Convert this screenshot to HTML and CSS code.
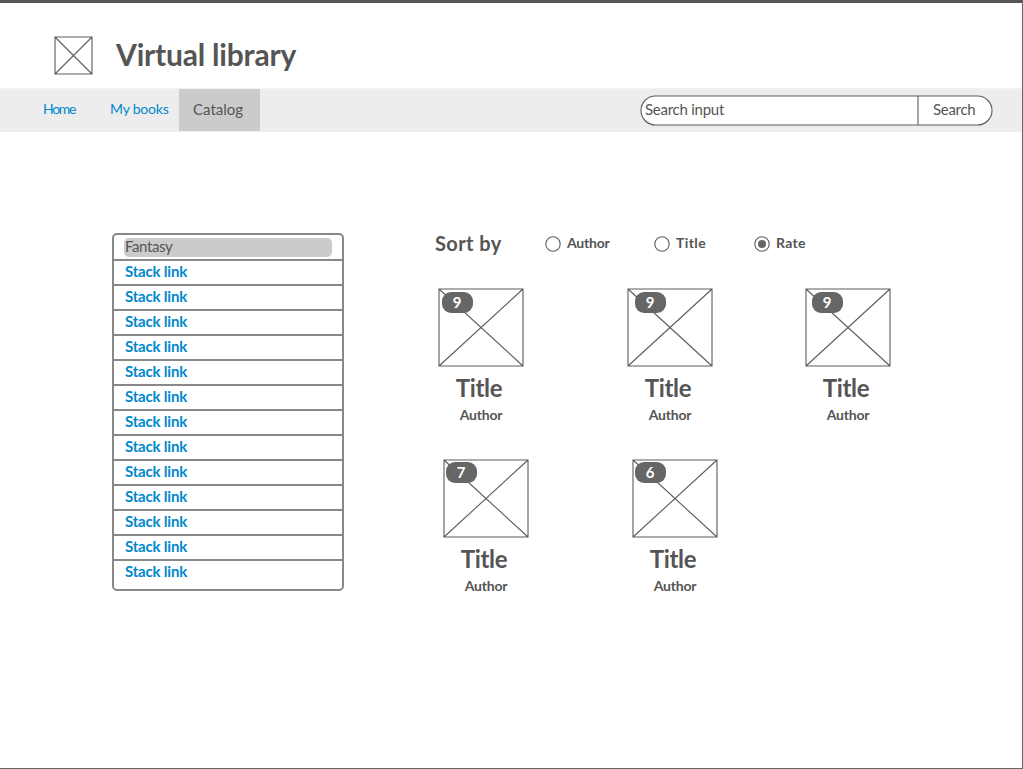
FILE: index.html
```html
<!DOCTYPE html>
<html lang="en">
<head>
<meta charset="utf-8">
<title>Virtual library</title>
<link rel="stylesheet" href="styles.css">
</head>
<body>
<svg class="defs" width="0" height="0" aria-hidden="true">
  <symbol id="cover" viewBox="0 0 86 79"><path class="line" d="M1 1h84v77H1zM1 1l84 77M85 1L1 78"/></symbol>
</svg>
<div class="page">
  <header class="header">
    <svg class="logo" width="39" height="39" viewBox="0 0 39 39"><path class="line" d="M1 1h37v37H1zM1 1l37 37M38 1L1 38"/></svg>
    <h1 class="brand">Virtual library</h1>
  </header>
  <nav class="nav">
    <a class="nav-link home">Home</a>
    <a class="nav-link my-books">My books</a>
    <a class="nav-link active">Catalog</a>
    <form class="search">
      <svg class="search-frame" width="353" height="31" viewBox="0 0 353 31"><rect class="frame" x="1" y="1" width="351" height="29" rx="14.5"/><path class="line" d="M278 1v29"/></svg>
      <span class="search-input">Search input</span>
      <span class="search-button">Search</span>
    </form>
  </nav>
  <main class="content">
    <ul class="stack">
      <li class="selected"><span>Fantasy</span></li>
      <li>Stack link</li><li>Stack link</li><li>Stack link</li><li>Stack link</li><li>Stack link</li>
      <li>Stack link</li><li>Stack link</li><li>Stack link</li><li>Stack link</li><li>Stack link</li>
      <li>Stack link</li><li>Stack link</li><li>Stack link</li>
    </ul>
    <section class="catalog">
      <div class="sort">
        <h2 class="sort-title">Sort by</h2>
        <label class="option author-option"><svg width="16" height="16"><circle class="line" cx="8" cy="8" r="7.2"/></svg><span>Author</span></label>
        <label class="option title-option"><svg width="16" height="16"><circle class="line" cx="8" cy="8" r="7.2"/></svg><span>Title</span></label>
        <label class="option rate-option"><svg width="16" height="16"><circle class="line" cx="8" cy="8" r="7.2"/><circle class="dot" cx="8" cy="8" r="4"/></svg><span>Rate</span></label>
      </div>
      <div class="books">
        <article class="book"><svg class="cover" width="86" height="79"><use href="#cover"/></svg><span class="badge b1">9</span><h3>Title</h3><p>Author</p></article>
        <article class="book"><svg class="cover" width="86" height="79"><use href="#cover"/></svg><span class="badge b2">9</span><h3>Title</h3><p>Author</p></article>
        <article class="book"><svg class="cover" width="86" height="79"><use href="#cover"/></svg><span class="badge b3">9</span><h3>Title</h3><p>Author</p></article>
      </div>
      <div class="books second">
        <article class="book"><svg class="cover" width="86" height="79"><use href="#cover"/></svg><span class="badge b4">7</span><h3>Title</h3><p>Author</p></article>
        <article class="book"><svg class="cover" width="86" height="79"><use href="#cover"/></svg><span class="badge b4">6</span><h3>Title</h3><p>Author</p></article>
      </div>
    </section>
  </main>
</div>
</body>
</html>
```
FILE: styles.css
```css
* { box-sizing: border-box; margin: 0; padding: 0; }
body { font-family: Lato, "Open Sans", sans-serif; font-size: 15px; color: #555; background: #fff; }
.defs { position: absolute; }
.line { fill: none; stroke: #5c5c5c; stroke-width: 1.1; }
.frame { fill: #fff; stroke: #5c5c5c; stroke-width: 1.1; }
.dot { fill: #666; }
.page { height: 769px; border-top: 3px solid #555; border-right: 1px solid #666; border-bottom: 1px solid #666; overflow: hidden; }
.header { display: flex; height: 85px; padding: 33px 0 0 54px; }
.brand { margin: -2px 0 0 23px; font-size: 30px; line-height: 40px; font-weight: 700; letter-spacing: -0.2px; white-space: nowrap; }
.nav { display: flex; height: 44px; background: #ededed; padding-left: 43px; line-height: 40px; border-top: 1px solid #f3f3f3; }
.nav-link { color: #0088cc; white-space: nowrap; }
.home { width: 67px; font-size: 14px; letter-spacing: -1.3px; }
.my-books { width: 68.5px; font-size: 14px; letter-spacing: -0.2px; }
.nav-link.active { width: 81px; height: 42px; padding-left: 14.5px; background: #cbcbcb; color: #555; }
.search { position: relative; display: flex; width: 353px; height: 31px; margin: 6px 0 0 380.5px; line-height: 29px; }
.search-frame { position: absolute; left: 0; top: 0; }
.search-input { position: relative; width: 278px; padding-left: 5px; letter-spacing: -0.25px; }
.search-button { position: relative; width: 75px; padding-left: 15px; letter-spacing: -0.3px; }
.content { display: flex; padding: 101px 0 0 112px; }
.stack { width: 232px; height: 358px; border: 2px solid #888; border-radius: 5px; list-style: none; font-weight: 700; }
.stack li { height: 25px; padding-left: 11px; border-bottom: 2px solid #888; line-height: 21px; letter-spacing: -0.2px; color: #0088cc; }
.stack li.selected { height: 26px; padding: 3px 10px 0 10px; font-weight: 400; letter-spacing: -0.4px; color: #555; }
.selected span { display: block; height: 19px; padding-left: 1px; border-radius: 5px; background: #cbcbcb; line-height: 16px; }
.stack li:last-child { border-bottom: 0; }
.catalog { width: 560px; padding-left: 91px; }
.sort { display: flex; height: 55px; }
.sort-title { width: 110px; font-size: 20px; line-height: 20px; font-weight: 700; letter-spacing: 0.4px; }
.option { display: flex; gap: 6px; padding-top: 3px; font-weight: 700; font-size: 14px; line-height: 14px; }
.author-option { width: 109px; letter-spacing: -0.2px; }
.title-option { width: 100px; letter-spacing: 0.4px; }
.rate-option { letter-spacing: 0.3px; }
.books { display: flex; padding-left: 3px; height: 171px; }
.book { position: relative; width: 86px; margin-right: 103px; flex: none; }
.book:nth-child(2) { margin-right: 92px; }
.cover { display: block; }
.books.second { padding-left: 8px; }
.book h3 { margin: 5px 0 0; padding-right: 4px; text-align: center; font-size: 24px; line-height: 32px; font-weight: 700; letter-spacing: -0.3px; }
.book p { text-align: center; font-size: 14px; font-weight: 700; line-height: 21px; letter-spacing: -0.2px; }
.badge { position: absolute; top: 4px; width: 31px; height: 21px; border-radius: 9px; background: #666; color: #fff; text-align: center; font-weight: 700; line-height: 20px; }
.b1 { left: 3.5px; }
.b2 { left: 7.5px; }
.b3 { left: 6.5px; }
.b4 { left: 2.5px; top: 3px; }
```
